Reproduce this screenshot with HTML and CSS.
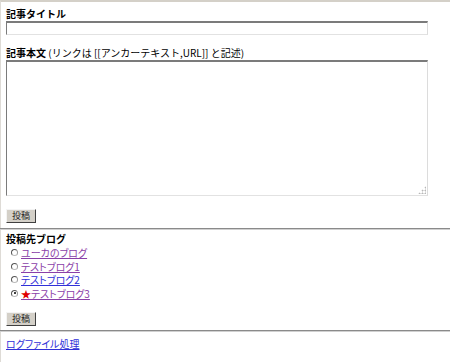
FILE: index.html
```html
<!DOCTYPE html>
<html lang="ja">
<head>
  <meta charset="utf-8">
  <title>記事投稿</title>
  <link rel="stylesheet" href="styles.css">
</head>
<body>

  <div class="page">
    <form class="post-form">
      <label class="field-label" for="title">記事タイトル</label>
      <input type="text" id="title" class="title-input">

      <label class="field-label label-body" for="body">記事本文 <span class="note">(リンクは [[アンカーテキスト,URL]] と記述)</span></label>
      <div class="body-wrap">
        <textarea id="body" class="body-input"></textarea>
      </div>

      <button type="button" class="btn btn-post">投稿</button>
    </form>

    <hr class="rule">

    <form class="blog-form">
      <div class="field-label blog-label">投稿先ブログ</div>
      <ul class="blog-list">
        <li><input type="radio" name="blog" class="radio"><a href="#" class="visited">ユーカのブログ</a></li>
        <li><input type="radio" name="blog" class="radio"><a href="#" class="visited">テストブログ1</a></li>
        <li><input type="radio" name="blog" class="radio"><a href="#">テストブログ2</a></li>
        <li><input type="radio" name="blog" class="radio" checked><a href="#" class="visited"><span class="star">★</span>テストブログ3</a></li>
      </ul>
      <button type="button" class="btn btn-blog">投稿</button>
    </form>

    <hr class="rule rule-second">

    <a href="#" class="log-link">ログファイル処理</a>
  </div>

</body>
</html>
```

FILE: styles.css
```css
body {
  margin: 0;
  font-family: "Noto Sans CJK JP", "Noto Sans", sans-serif;
  font-size: 10px;
  color: #000;
  background: #fff;
}
.page {
  height: 360px;
  border-top: 2px solid #d4d0c8;
  border-left: 1px solid #dedbd6;
  padding-left: 5px;
}
.field-label {
  display: block;
  font-weight: bold;
  line-height: 12px;
  margin-top: 6px;
}
.label-body {
  margin-top: 12px;
}
.note {
  font-weight: normal;
}
.title-input, .body-input {
  display: block;
  box-sizing: border-box;
  width: 422px;
  margin: 1px 0 0 0;
  padding: 0;
  border: 1px solid;
  border-top-width: 2px;
  border-color: #7b7b7b #dcdcdc #e2e2e2 #7b7b7b;
  background: #fff;
  font: inherit;
}
.title-input {
  height: 14px;
}
.body-wrap {
  position: relative;
  width: 422px;
}
/* faint grip dots in the corner */
.body-wrap::after {
  content: "";
  position: absolute;
  right: 2px;
  bottom: 2px;
  width: 8px;
  height: 8px;
  background: radial-gradient(circle, #b8b8b8 0.9px, transparent 1.1px) 0 0 / 3px 3px;
  clip-path: polygon(100% 0, 100% 100%, 0 100%);
}
.body-input {
  height: 136px;
  resize: none;
}
.btn {
  display: block;
  box-sizing: border-box;
  width: 30px;
  height: 14px;
  padding: 0;
  font-family: inherit;
  font-size: 9px;
  line-height: 12px;
  color: #222;
  background: #d4d0c8;
  border: 1px solid;
  border-color: #f4f4f4 #404040 #404040 #f4f4f4;
}
.btn-post {
  margin-top: 13px;
}
.btn-blog {
  margin-top: 12px;
}
.rule {
  margin: 5px 0 0 -6px;
  height: 0;
  border: 0;
  border-top: 1px solid #8a8a8a;
  border-bottom: 1px solid #d0d0d0;
}
.rule-second {
  margin-top: 4px;
}
.blog-label {
  margin-top: 3px;
}
.blog-list {
  list-style: none;
  margin: 0;
  padding: 1px 0 0 5px;
  font-feature-settings: "palt";
}
.blog-list li {
  display: flex;
  align-items: center;
  height: 13.5px;
  line-height: 13.5px;
}
.radio {
  appearance: none;
  box-sizing: border-box;
  width: 7px;
  height: 7px;
  margin: 0 3px 0 0;
  border: 1px solid #555;
  border-right-color: #999;
  border-bottom-color: #bbb;
  border-radius: 50%;
  background: #fff;
  position: relative;
}
.radio:checked::after {
  content: "";
  position: absolute;
  left: 1.5px;
  top: 1.5px;
  width: 2px;
  height: 2px;
  border-radius: 50%;
  background: #000;
}
a {
  color: #3030d8;
}
a.visited {
  color: #8a40a8;
}
.star {
  color: #e00000;
}
.log-link {
  display: block;
  margin-top: 6px;
  line-height: 12px;
  width: max-content;
  font-feature-settings: "palt";
}
```
